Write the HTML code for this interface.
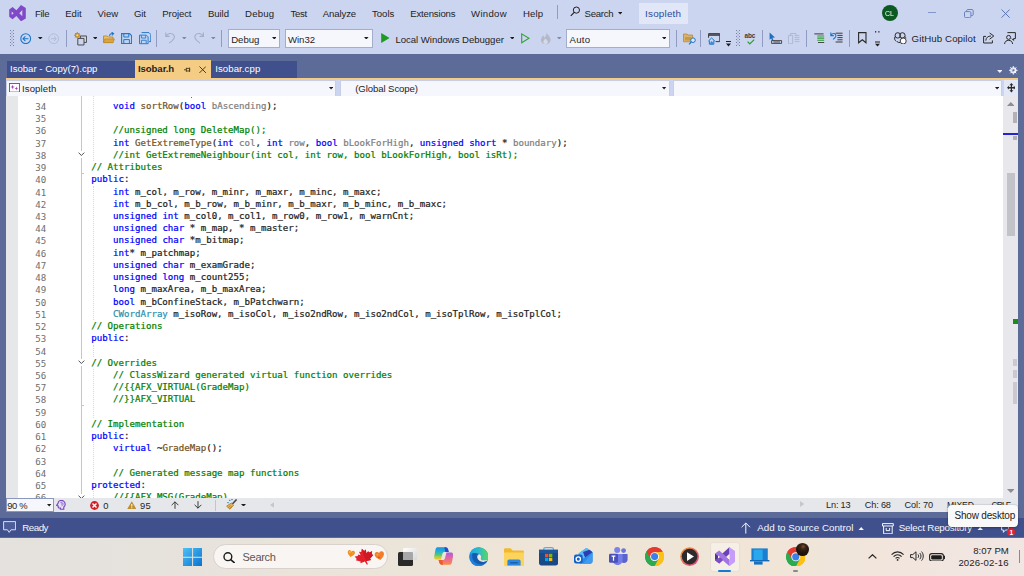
<!DOCTYPE html>
<html lang="en">
<head>
<meta charset="utf-8">
<title>Isopleth - Microsoft Visual Studio</title>
<style>
*{margin:0;padding:0;box-sizing:border-box}
html,body{width:1024px;height:576px;overflow:hidden;background:#5d6b99}
body{position:relative;font-family:"Liberation Sans",sans-serif;font-size:9.5px;color:#1e1e1e}
.r{position:absolute;display:block}
.t{position:absolute;white-space:pre}
#code{position:absolute;left:0;top:0;width:997px;height:402px;font-family:"DejaVu Sans Mono","Liberation Mono",monospace;font-size:9.11px;white-space:pre;color:#1e1e1e}
.ln{position:absolute;left:0;width:997px;height:12.226px;line-height:12.226px}
.ln i{position:absolute;left:29.2px;top:1px;font-style:normal;color:#6e6e6e}
.ln b{position:absolute;left:85.2px;font-weight:normal;-webkit-text-stroke:0.22px currentColor}
.k{color:#0000ff}.c{color:#008000}.f{color:#74531f}.p{color:#808080}.y{color:#2b91af}
</style>
</head>
<body>
<div class="r" style="left:0.0px;top:0.0px;width:1024.0px;height:54.5px;background:#ccd5f0;"></div>
<svg class="r" style="left:9.0px;top:4.7px" width="17" height="16.3" viewBox="0 0 17 16.3"><path d="M0.2 4.6 L3.6 2.1 L7.4 5.3 L12 0 L16.8 2.9 V13.4 L12 16.3 L7.4 11 L3.6 14.2 L0.2 11.7 Z M2.7 6.4 V9.9 L4.7 8.15 Z M13.3 5 L10.3 8.15 L13.3 11.3 Z" fill="#8149c8" fill-rule="evenodd"/></svg>
<div class="t" style="left:35.0px;top:4px;font-size:9.60px;line-height:20px;color:#1e1e1e;letter-spacing:-0.317px;">File</div>
<div class="t" style="left:65.2px;top:4px;font-size:9.60px;line-height:20px;color:#1e1e1e;letter-spacing:-0.011px;">Edit</div>
<div class="t" style="left:97.6px;top:4px;font-size:9.60px;line-height:20px;color:#1e1e1e;letter-spacing:-0.009px;">View</div>
<div class="t" style="left:134.0px;top:4px;font-size:9.60px;line-height:20px;color:#1e1e1e;letter-spacing:-0.122px;">Git</div>
<div class="t" style="left:162.3px;top:4px;font-size:9.60px;line-height:20px;color:#1e1e1e;letter-spacing:-0.111px;">Project</div>
<div class="t" style="left:208.0px;top:4px;font-size:9.60px;line-height:20px;color:#1e1e1e;letter-spacing:-0.089px;">Build</div>
<div class="t" style="left:245.1px;top:4px;font-size:9.60px;line-height:20px;color:#1e1e1e;letter-spacing:0.162px;">Debug</div>
<div class="t" style="left:290.6px;top:4px;font-size:9.60px;line-height:20px;color:#1e1e1e;letter-spacing:-0.352px;">Test</div>
<div class="t" style="left:322.8px;top:4px;font-size:9.60px;line-height:20px;color:#1e1e1e;letter-spacing:-0.122px;">Analyze</div>
<div class="t" style="left:371.9px;top:4px;font-size:9.60px;line-height:20px;color:#1e1e1e;letter-spacing:0.018px;">Tools</div>
<div class="t" style="left:410.3px;top:4px;font-size:9.60px;line-height:20px;color:#1e1e1e;letter-spacing:-0.196px;">Extensions</div>
<div class="t" style="left:471.1px;top:4px;font-size:9.60px;line-height:20px;color:#1e1e1e;letter-spacing:0.293px;">Window</div>
<div class="t" style="left:523.0px;top:4px;font-size:9.60px;line-height:20px;color:#1e1e1e;letter-spacing:0.114px;">Help</div>
<div class="r" style="left:556.5px;top:4.5px;width:1.0px;height:14.5px;background:#8f9bc0;"></div>
<svg class="r" style="left:569.5px;top:6.0px" width="10.5" height="11" viewBox="0 0 10.5 11"><circle cx="6.4" cy="4.1" r="3.1" fill="none" stroke="#1e1e1e" stroke-width="1"/><path d="M4.2 6.4 L0.8 9.9" stroke="#1e1e1e" stroke-width="1.1" fill="none"/></svg>
<div class="t" style="left:584.6px;top:4px;font-size:9.60px;line-height:20px;color:#1e1e1e;letter-spacing:-0.270px;">Search</div>
<svg class="r" style="left:617.6px;top:12.2px" width="4.4" height="2.4" viewBox="0 0 4.4 2.4"><path d="M0 0H4.4 L2.2 2.4 Z" fill="#1e1e1e"/></svg>
<div class="r" style="left:639.0px;top:3.0px;width:48.7px;height:20.8px;background:#e1e7f7;"></div>
<div class="t" style="left:645.1px;top:4px;font-size:9.90px;line-height:20px;color:#2a4a9c;letter-spacing:0.191px;">Isopleth</div>
<div class="r" style="left:881.6px;top:5px;width:16.2px;height:16.2px;border-radius:50%;background:#0b5a22"></div>
<div class="t" style="left:885.1px;top:4px;font-size:7.00px;line-height:20px;color:#fff;letter-spacing:-0.174px;will-change:transform;">CL</div>
<div class="r" style="left:927.5px;top:12.2px;width:8.2px;height:1.1px;background:#8196ca;"></div>
<svg class="r" style="left:963.5px;top:8.6px" width="10" height="9.2" viewBox="0 0 10 9.2"><rect x="0.5" y="2.6" width="6.4" height="6.1" rx="1.2" fill="none" stroke="#6582c0" stroke-width="1"/><path d="M2.6 2.4 V1.7 C2.6 1 3.2 0.5 3.8 0.5 H8 C8.7 0.5 9.2 1 9.2 1.7 V5.4 C9.2 6.1 8.7 6.6 8 6.6 H7.2" fill="none" stroke="#6582c0" stroke-width="1"/></svg>
<svg class="r" style="left:1000.6px;top:8.6px" width="9.2" height="9.2" viewBox="0 0 9.2 9.2"><path d="M0.5 0.5 L8.7 8.7 M8.7 0.5 L0.5 8.7" stroke="#5a76b6" stroke-width="1" fill="none"/></svg>
<svg class="r" style="left:10.2px;top:30.2px" width="4.5" height="15.8" viewBox="0 0 4.5 15.8"><rect x="0" y="0" width="1" height="1" fill="#7983a8"/><rect x="3" y="0" width="1" height="1" fill="#7983a8"/><rect x="1.5" y="1.5" width="1" height="1" fill="#7983a8"/><rect x="0" y="3" width="1" height="1" fill="#7983a8"/><rect x="3" y="3" width="1" height="1" fill="#7983a8"/><rect x="1.5" y="4.5" width="1" height="1" fill="#7983a8"/><rect x="0" y="6" width="1" height="1" fill="#7983a8"/><rect x="3" y="6" width="1" height="1" fill="#7983a8"/><rect x="1.5" y="7.5" width="1" height="1" fill="#7983a8"/><rect x="0" y="9" width="1" height="1" fill="#7983a8"/><rect x="3" y="9" width="1" height="1" fill="#7983a8"/><rect x="1.5" y="10.5" width="1" height="1" fill="#7983a8"/><rect x="0" y="12" width="1" height="1" fill="#7983a8"/><rect x="3" y="12" width="1" height="1" fill="#7983a8"/><rect x="1.5" y="13.5" width="1" height="1" fill="#7983a8"/><rect x="0" y="15" width="1" height="1" fill="#7983a8"/><rect x="3" y="15" width="1" height="1" fill="#7983a8"/><rect x="1.5" y="16.5" width="1" height="1" fill="#7983a8"/></svg>
<svg class="r" style="left:20.2px;top:33.0px" width="11.4" height="11.4" viewBox="0 0 11.4 11.4"><circle cx="5.7" cy="5.7" r="4.9" fill="none" stroke="#1b76c8" stroke-width="1.1"/><path d="M8.4 5.7 H3.2 M5.4 3.3 L3 5.7 L5.4 8.1" fill="none" stroke="#1b76c8" stroke-width="1.1"/></svg>
<svg class="r" style="left:38.0px;top:36.9px" width="4.6" height="2.6" viewBox="0 0 4.6 2.6"><path d="M0 0H4.6 L2.3 2.6 Z" fill="#1e1e1e"/></svg>
<svg class="r" style="left:48.2px;top:33.0px" width="11.4" height="11.4" viewBox="0 0 11.4 11.4"><circle cx="5.7" cy="5.7" r="4.9" fill="none" stroke="#b3bbd4" stroke-width="1"/><path d="M3 5.7 H8.2 M6 3.3 L8.4 5.7 L6 8.1" fill="none" stroke="#b3bbd4" stroke-width="1"/></svg>
<div class="r" style="left:65.8px;top:30.1px;width:1.0px;height:17.2px;background:#8f9bc0;"></div>
<svg class="r" style="left:73.6px;top:32.0px" width="13.6" height="13.6" viewBox="0 0 13.6 13.6"><path d="M6.4 4 H12.6 V10.4 H6.4 Z" fill="#ccd5f0" stroke="#4a4a4a" stroke-width="1"/><path d="M3.8 6.4 H10 V13 H3.8 Z" fill="#ccd5f0" stroke="#4a4a4a" stroke-width="1"/><circle cx="3.3" cy="3.3" r="1.9" fill="none" stroke="#c98a1b" stroke-width="1.2"/><path d="M3.3 0 V6.6 M0 3.3 H6.6 M1 1 L5.6 5.6 M5.6 1 L1 5.6" stroke="#c98a1b" stroke-width="0.9"/><circle cx="3.3" cy="3.3" r="1.1" fill="#ccd5f0"/></svg>
<svg class="r" style="left:92.6px;top:36.9px" width="4.6" height="2.6" viewBox="0 0 4.6 2.6"><path d="M0 0H4.6 L2.3 2.6 Z" fill="#1e1e1e"/></svg>
<svg class="r" style="left:102.8px;top:32.4px" width="12.2" height="11.4" viewBox="0 0 12.2 11.4"><path d="M0.5 4 H4.3 L5.3 5 H10 V10.6 H0.5 Z" fill="#e6bf74" stroke="#bf8a25" stroke-width="0.9"/><path d="M1.8 7 H11.4 L10 10.6 H0.6 Z" fill="#d9a544" stroke="#bf8a25" stroke-width="0.8"/><path d="M6.6 4 C6.6 2 8 1.4 10 1.6 M8.6 0.2 L10.6 1.6 L8.9 3.3" fill="none" stroke="#1b76c8" stroke-width="1.1"/></svg>
<svg class="r" style="left:121.0px;top:33.0px" width="11.4" height="11.4" viewBox="0 0 11.4 11.4"><path d="M0.6 0.6 H8.6 L10.6 2.6 V10.6 H0.6 Z" fill="#bdd5f3" stroke="#2577c9" stroke-width="1.1"/><path d="M2.8 0.8 V4 H7.8 V0.8 M2.8 10.4 V6.6 H8.4 V10.4" fill="none" stroke="#2577c9" stroke-width="1"/></svg>
<svg class="r" style="left:138.6px;top:32.4px" width="12.4" height="12.4" viewBox="0 0 12.4 12.4"><path d="M2.6 0.6 H10 L11.8 2.4 V9.6 H10" fill="none" stroke="#2577c9" stroke-width="1"/><g transform="translate(0,2.6) scale(0.86)"><path d="M0.6 0.6 H8.6 L10.6 2.6 V10.6 H0.6 Z" fill="#bdd5f3" stroke="#2577c9" stroke-width="1.1"/><path d="M2.8 0.8 V4 H7.8 V0.8 M2.8 10.4 V6.6 H8.4 V10.4" fill="none" stroke="#2577c9" stroke-width="1"/></g></svg>
<div class="r" style="left:156.4px;top:30.1px;width:1.0px;height:17.2px;background:#8f9bc0;"></div>
<svg class="r" style="left:165.0px;top:32.4px" width="10.2" height="11.4" viewBox="0 0 10.2 11.4"><path d="M0.8 0.6 V4.4 H4.6 M1 4.2 C2.6 1.2 6.6 0.6 8.6 2.8 C10.6 5.2 8.6 8.4 4.2 11" fill="none" stroke="#a4accb" stroke-width="1.1"/></svg>
<svg class="r" style="left:182.4px;top:36.9px" width="4.6" height="2.6" viewBox="0 0 4.6 2.6"><path d="M0 0H4.6 L2.3 2.6 Z" fill="#7f88a8"/></svg>
<svg class="r" style="left:194.0px;top:32.4px" width="10.2" height="11.4" viewBox="0 0 10.2 11.4"><g transform="translate(10.2,0) scale(-1,1)"><path d="M0.8 0.6 V4.4 H4.6 M1 4.2 C2.6 1.2 6.6 0.6 8.6 2.8 C10.6 5.2 8.6 8.4 4.2 11" fill="none" stroke="#a4accb" stroke-width="1.1"/></g></svg>
<svg class="r" style="left:211.0px;top:36.9px" width="4.6" height="2.6" viewBox="0 0 4.6 2.6"><path d="M0 0H4.6 L2.3 2.6 Z" fill="#7f88a8"/></svg>
<div class="r" style="left:221.2px;top:30.1px;width:1.0px;height:17.2px;background:#8f9bc0;"></div>
<div class="r" style="left:228.3px;top:29.3px;width:51.4px;height:18.9px;background:#f5f7fd;border:1px solid #a3adcc"></div>
<div class="t" style="left:231.2px;top:30px;font-size:9.60px;line-height:20px;color:#1e1e1e;letter-spacing:-0.018px;">Debug</div>
<svg class="r" style="left:271.5px;top:36.9px" width="4.6" height="2.6" viewBox="0 0 4.6 2.6"><path d="M0 0H4.6 L2.3 2.6 Z" fill="#1e1e1e"/></svg>
<div class="r" style="left:285.0px;top:29.3px;width:87.6px;height:18.9px;background:#f5f7fd;border:1px solid #a3adcc"></div>
<div class="t" style="left:287.9px;top:30px;font-size:9.60px;line-height:20px;color:#1e1e1e;letter-spacing:0.018px;">Win32</div>
<svg class="r" style="left:364.4px;top:36.9px" width="4.6" height="2.6" viewBox="0 0 4.6 2.6"><path d="M0 0H4.6 L2.3 2.6 Z" fill="#1e1e1e"/></svg>
<svg class="r" style="left:381.2px;top:33.4px" width="8.8" height="10.2" viewBox="0 0 8.8 10.2"><path d="M0.2 0.1 L8.6 5.1 L0.2 10.1 Z" fill="#1d9a22"/></svg>
<div class="t" style="left:395.5px;top:30px;font-size:9.60px;line-height:20px;color:#1e1e1e;letter-spacing:-0.045px;">Local Windows Debugger</div>
<svg class="r" style="left:509.6px;top:36.9px" width="4.6" height="2.6" viewBox="0 0 4.6 2.6"><path d="M0 0H4.6 L2.3 2.6 Z" fill="#1e1e1e"/></svg>
<svg class="r" style="left:521.3px;top:33.0px" width="9" height="10.6" viewBox="0 0 9 10.6"><path d="M0.7 0.9 L8 5.3 L0.7 9.7 Z" fill="none" stroke="#2da334" stroke-width="1.1"/></svg>
<svg class="r" style="left:540.0px;top:32.0px" width="11.6" height="12.6" viewBox="0 0 11.6 12.6"><path d="M6.4 0.4 C7.4 2.4 9.6 3.6 10.4 6.4 C11.2 9.6 9 12.2 5.8 12.2 C2.6 12.2 0.4 9.8 1 7 C1.4 5.2 2.6 4.6 3 3.2 C4 4 4.2 5 4.2 5.8 C5.8 4.6 6.8 2.6 6.4 0.4 Z" fill="#b4b9c9"/><path d="M5.8 12 C4 12 3 10.6 3.4 9.2 C3.8 8 4.8 7.6 5 6.4 C6.6 7.4 8 8.6 7.8 10.2 C7.6 11.4 6.8 12 5.8 12 Z" fill="#d6dbea"/></svg>
<svg class="r" style="left:557.0px;top:36.9px" width="4.6" height="2.6" viewBox="0 0 4.6 2.6"><path d="M0 0H4.6 L2.3 2.6 Z" fill="#7f88a8"/></svg>
<div class="r" style="left:566.4px;top:29.3px;width:103.6px;height:18.9px;background:#f5f7fd;border:1px solid #a3adcc"></div>
<div class="t" style="left:569.6px;top:30px;font-size:9.60px;line-height:20px;color:#1e1e1e;letter-spacing:0.213px;">Auto</div>
<svg class="r" style="left:661.8px;top:36.9px" width="4.6" height="2.6" viewBox="0 0 4.6 2.6"><path d="M0 0H4.6 L2.3 2.6 Z" fill="#1e1e1e"/></svg>
<div class="r" style="left:675.6px;top:30.1px;width:1.0px;height:17.2px;background:#8f9bc0;"></div>
<svg class="r" style="left:683.0px;top:33.0px" width="13.2" height="11.8" viewBox="0 0 13.2 11.8"><path d="M0.5 1 H4 L5 2 H9.6 V8.8 H0.5 Z" fill="#d9b16a" stroke="#b88a35" stroke-width="0.8"/><rect x="2" y="4" width="6" height="3.4" fill="#c79a4a"/><circle cx="10" cy="7.2" r="2.3" fill="#dfe9fb" stroke="#1b76c8" stroke-width="1"/><path d="M8.4 9 L6 11.4" stroke="#1b76c8" stroke-width="1.1"/></svg>
<div class="r" style="left:700.4px;top:30.1px;width:1.0px;height:17.2px;background:#8f9bc0;"></div>
<svg class="r" style="left:707.6px;top:33.4px" width="12.6" height="11.8" viewBox="0 0 12.6 11.8"><path d="M0.6 0.6 H11.8 V8.6 H7.6 M0.6 4.8 V0.6" fill="none" stroke="#3a3a3a" stroke-width="1"/><path d="M0.6 1.2 H11.8 V2.8 H0.6 Z" fill="#3a3a3a"/><path d="M0.4 8 L3.6 5 L6.8 8 M1.4 7.6 V11.2 H5.8 V7.6 M3 11.2 V9 H4.2 V11.2" fill="none" stroke="#1b76c8" stroke-width="1"/></svg>
<svg class="r" style="left:726.0px;top:41.4px" width="5" height="5.6" viewBox="0 0 5 5.6"><path d="M0 0.5 H5" stroke="#1e1e1e" stroke-width="1"/><path d="M0 2.4 H5 L2.5 5.4 Z" fill="#1e1e1e"/></svg>
<svg class="r" style="left:735.8px;top:30.2px" width="4.5" height="15.8" viewBox="0 0 4.5 15.8"><rect x="0" y="0" width="1" height="1" fill="#7983a8"/><rect x="3" y="0" width="1" height="1" fill="#7983a8"/><rect x="1.5" y="1.5" width="1" height="1" fill="#7983a8"/><rect x="0" y="3" width="1" height="1" fill="#7983a8"/><rect x="3" y="3" width="1" height="1" fill="#7983a8"/><rect x="1.5" y="4.5" width="1" height="1" fill="#7983a8"/><rect x="0" y="6" width="1" height="1" fill="#7983a8"/><rect x="3" y="6" width="1" height="1" fill="#7983a8"/><rect x="1.5" y="7.5" width="1" height="1" fill="#7983a8"/><rect x="0" y="9" width="1" height="1" fill="#7983a8"/><rect x="3" y="9" width="1" height="1" fill="#7983a8"/><rect x="1.5" y="10.5" width="1" height="1" fill="#7983a8"/><rect x="0" y="12" width="1" height="1" fill="#7983a8"/><rect x="3" y="12" width="1" height="1" fill="#7983a8"/><rect x="1.5" y="13.5" width="1" height="1" fill="#7983a8"/><rect x="0" y="15" width="1" height="1" fill="#7983a8"/><rect x="3" y="15" width="1" height="1" fill="#7983a8"/><rect x="1.5" y="16.5" width="1" height="1" fill="#7983a8"/></svg>
<div class="t" style="left:744.6px;top:32.2px;font-size:6.4px;line-height:7px;font-weight:bold;color:#3a3a3a;letter-spacing:-0.1px">abc</div>
<svg class="r" style="left:747.0px;top:38.6px" width="8" height="6" viewBox="0 0 8 6"><path d="M0.6 2.6 L2.8 5 L7.2 0.6" fill="none" stroke="#2a9d2f" stroke-width="1.2"/></svg>
<div class="r" style="left:761.8px;top:30.1px;width:1.0px;height:17.2px;background:#8f9bc0;"></div>
<svg class="r" style="left:769.4px;top:32.4px" width="13.4" height="12" viewBox="0 0 13.4 12"><path d="M0.6 0.4 L6 5.6 L3.4 5.8 L4.6 8.6 L3.4 9 L2.2 6.4 L0.6 7.8 Z" fill="#1b6fc0"/><path d="M2.6 8.6 H12.6 V11.4 H2.6 Z M4.4 10 H11" fill="none" stroke="#3a3a3a" stroke-width="0.9"/></svg>
<svg class="r" style="left:788.0px;top:33.0px" width="12" height="11.4" viewBox="0 0 12 11.4"><path d="M0.5 2.4 H4.6 V10.8 H0.5 Z M2.4 2.2 V0.5 H8 V2.4 M6.6 2.6 H11.4 M6.6 4.6 H11.4 M6.6 6.6 H11.4 M6.6 8.6 H11.4" fill="none" stroke="#b0b8d2" stroke-width="1"/></svg>
<div class="r" style="left:805.8px;top:30.1px;width:1.0px;height:17.2px;background:#8f9bc0;"></div>
<svg class="r" style="left:814.0px;top:32.8px" width="10.6" height="10.6" viewBox="0 0 10.6 10.6"><path d="M0.3 0.9 H9.6" stroke="#3a3a3a" stroke-width="1"/><path d="M3.3 3 H10.2 M3.3 5.1 H10.2 M3.3 7.2 H10.2" stroke="#2a9d2f" stroke-width="1.1"/><path d="M4 9.6 H10.2" stroke="#3a3a3a" stroke-width="1"/></svg>
<svg class="r" style="left:830.4px;top:32.4px" width="12.8" height="11.2" viewBox="0 0 12.8 11.2"><path d="M5.6 1.2 H12.6 M7.4 3.4 H12.6 M7.4 5.6 H12.6 M7.4 7.8 H12.6 M5.6 10 H12.6" stroke="#3a3a3a" stroke-width="1"/><path d="M0.8 0.6 V3.6 H3.8 M1 3.4 C2 1.2 4.6 1 5.6 2.6 C6.6 4.4 5.2 6 3 7.4" fill="none" stroke="#1b76c8" stroke-width="1.1"/></svg>
<div class="r" style="left:848.8px;top:30.1px;width:1.0px;height:17.2px;background:#8f9bc0;"></div>
<svg class="r" style="left:858.0px;top:32.4px" width="8.8" height="11.6" viewBox="0 0 8.8 11.6"><path d="M0.6 0.6 H8 V10.8 L4.3 7.8 L0.6 10.8 Z" fill="none" stroke="#2a2a2a" stroke-width="1.1"/></svg>
<svg class="r" style="left:875.4px;top:31.0px" width="5" height="16" viewBox="0 0 5 16"><rect x="0.2" y="0" width="1" height="1.6" fill="#1e1e1e"/><rect x="3.4" y="0" width="1" height="1.6" fill="#1e1e1e"/><path d="M0 11 H5" stroke="#1e1e1e" stroke-width="1"/><path d="M0 12.8 H5 L2.5 15.6 Z" fill="#1e1e1e"/></svg>
<svg class="r" style="left:894.4px;top:31.6px" width="12.8" height="12.4" viewBox="0 0 12.8 12.4"><circle cx="3.8" cy="3.4" r="2.7" fill="none" stroke="#2a2a2a" stroke-width="1"/><circle cx="8.4" cy="3.4" r="2.7" fill="none" stroke="#2a2a2a" stroke-width="1"/><path d="M1 4.6 C0.2 6.4 0.6 8.4 2.4 9.4 M11.2 4.6 C11.6 5.2 11.8 5.8 11.8 6.4" fill="none" stroke="#2a2a2a" stroke-width="1"/><circle cx="9.2" cy="9" r="3" fill="#fff" stroke="#2a2a2a" stroke-width="0.9"/><path d="M3 9.6 C4 10.4 5 10.6 6 10.6" fill="none" stroke="#2a2a2a" stroke-width="1"/></svg>
<div class="t" style="left:911.6px;top:29px;font-size:9.70px;line-height:20px;color:#1e1e1e;letter-spacing:0.087px;">GitHub Copilot</div>
<svg class="r" style="left:983.0px;top:32.4px" width="12" height="11.6" viewBox="0 0 12 11.6"><path d="M3 4.4 H0.6 V11 H9.4 V8.4" fill="none" stroke="#2a2a2a" stroke-width="1"/><path d="M2.8 8.6 C3 5.6 5 4 8 4 M6.6 1 L10.8 4 L6.6 7.2" fill="none" stroke="#2a2a2a" stroke-width="1"/></svg>
<svg class="r" style="left:1004.0px;top:32.0px" width="12" height="12.4" viewBox="0 0 12 12.4"><path d="M3.4 0.6 H11.4 V6.6 H9.6 V8.4 L7.8 6.6" fill="none" stroke="#2a2a2a" stroke-width="1"/><circle cx="4.6" cy="5.4" r="2" fill="#ccd5f0" stroke="#2a2a2a" stroke-width="1"/><path d="M0.6 12 C0.8 9.4 2.4 8.4 4.6 8.4 C6.8 8.4 8.4 9.4 8.6 12" fill="none" stroke="#2a2a2a" stroke-width="1"/></svg>
<div class="r" style="left:0.0px;top:54.0px;width:1024.0px;height:26.0px;background:#5d6b99;"></div>
<div class="r" style="left:7.0px;top:61.0px;width:127.6px;height:17.0px;background:#40508d;"></div>
<div class="t" style="left:10.0px;top:59px;font-size:9.60px;line-height:20px;color:#fff;letter-spacing:-0.005px;">Isobar - Copy(7).cpp</div>
<div class="r" style="left:134.6px;top:59.7px;width:76.4px;height:18.3px;background:#f5cc84;"></div>
<div class="t" style="left:137.9px;top:59px;font-size:9.60px;line-height:20px;color:#1e1e1e;font-weight:bold;letter-spacing:-0.064px;">Isobar.h</div>
<svg class="r" style="left:183.6px;top:66.6px" width="7" height="5.6" viewBox="0 0 7 5.6"><path d="M0 2.8 H2.4 M2.4 0.8 V4.8 M2.4 1.4 H5.6 V4 H2.4 M5.6 0.6 V5" fill="none" stroke="#4a3a1a" stroke-width="0.9"/></svg>
<svg class="r" style="left:199.0px;top:65.6px" width="7.4" height="7.4" viewBox="0 0 7.4 7.4"><path d="M0.5 0.5 L6.9 6.9 M6.9 0.5 L0.5 6.9" stroke="#3a2c10" stroke-width="0.9"/></svg>
<div class="r" style="left:211.0px;top:61.0px;width:86.0px;height:17.0px;background:#40508d;"></div>
<div class="t" style="left:215.2px;top:59px;font-size:9.60px;line-height:20px;color:#fff;letter-spacing:0.090px;">Isobar.cpp</div>
<div class="r" style="left:6.0px;top:78.0px;width:1012.0px;height:2.0px;background:#f5cc84;"></div>
<svg class="r" style="left:996.8px;top:69.8px" width="5.6" height="3" viewBox="0 0 5.6 3"><path d="M0 0H5.6 L2.8 3 Z" fill="#eef1fb"/></svg>
<svg class="r" style="left:1009.4px;top:66.4px" width="8.6" height="8.6" viewBox="0 0 8.6 8.6"><circle cx="4.3" cy="4.3" r="2.5" fill="none" stroke="#eef1fb" stroke-width="1.3"/><path d="M4.3 0 V8.6 M0 4.3 H8.6 M1.3 1.3 L7.3 7.3 M7.3 1.3 L1.3 7.3" stroke="#eef1fb" stroke-width="1"/><circle cx="4.3" cy="4.3" r="1" fill="#5d6b99"/></svg>
<div class="r" style="left:6.0px;top:80.0px;width:1012.0px;height:16.5px;background:#ccd5f0;"></div>
<div class="r" style="left:6.0px;top:80px;width:330.3px;height:16.5px;background:#f5f7fd;border:1px solid #c7cfe8;border-bottom:1.6px solid #7e8bb3"></div>
<svg class="r" style="left:328.7px;top:87.4px" width="4.2" height="2.4" viewBox="0 0 4.2 2.4"><path d="M0 0H4.2 L2.1 2.4 Z" fill="#1e1e1e"/></svg>
<div class="r" style="left:339.6px;top:80px;width:330.4px;height:16.5px;background:#f5f7fd;border:1px solid #c7cfe8;border-bottom:1.6px solid #7e8bb3"></div>
<svg class="r" style="left:662.4px;top:87.4px" width="4.2" height="2.4" viewBox="0 0 4.2 2.4"><path d="M0 0H4.2 L2.1 2.4 Z" fill="#1e1e1e"/></svg>
<div class="r" style="left:673.0px;top:80px;width:329.4px;height:16.5px;background:#f5f7fd;border:1px solid #c7cfe8;border-bottom:1.6px solid #7e8bb3"></div>
<svg class="r" style="left:994.8px;top:87.4px" width="4.2" height="2.4" viewBox="0 0 4.2 2.4"><path d="M0 0H4.2 L2.1 2.4 Z" fill="#1e1e1e"/></svg>
<svg class="r" style="left:8.8px;top:82.6px" width="11" height="9.6" viewBox="0 0 11 9.6"><rect x="0.5" y="0.5" width="10" height="8.6" fill="#fdfdff" stroke="#5a5a5a" stroke-width="0.9"/><path d="M3.6 1.8 L4.2 3.4 L5.8 4 L4.2 4.6 L3.6 6.2 L3 4.6 L1.4 4 L3 3.4 Z M7.4 3.6 L7.9 4.9 L9.2 5.4 L7.9 5.9 L7.4 7.2 L6.9 5.9 L5.6 5.4 L6.9 4.9 Z" fill="#a33fb5"/></svg>
<div class="t" style="left:22.0px;top:79px;font-size:9.60px;line-height:20px;color:#1e1e1e;letter-spacing:0.097px;">Isopleth</div>
<div class="t" style="left:355.2px;top:79px;font-size:9.60px;line-height:20px;color:#1e1e1e;letter-spacing:-0.088px;">(Global Scope)</div>
<div class="r" style="left:1004.0px;top:80.0px;width:14.0px;height:16.5px;background:#e3e8f7;"></div>
<svg class="r" style="left:1006.6px;top:83.4px" width="8.8" height="9.4" viewBox="0 0 8.8 9.4"><path d="M4.4 0 L6.4 2.2 H5 V4 H6.8 V2.8 L8.8 4.7 L6.8 6.6 V5.4 H5 V7.2 H6.4 L4.4 9.4 L2.4 7.2 H3.8 V5.4 H2 V6.6 L0 4.7 L2 2.8 V4 H3.8 V2.2 H2.4 Z" fill="#2a2a2a"/></svg>
<div class="r" style="left:6px;top:96.4px;width:997px;height:401.6px;background:#fff;overflow:hidden">
<div class="r" style="left:0;top:0;width:12px;height:402px;background:#e6e7e8"></div>
<div class="r" style="left:75.2px;top:0;width:0.7px;height:402px;background:#c6c6c6"></div>
<div class="r" style="left:86.8px;top:0.00px;width:0;height:64.73px;border-left:0.8px dotted #d9d9d9"></div>
<div class="r" style="left:86.8px;top:89.18px;width:0;height:134.49px;border-left:0.8px dotted #d9d9d9"></div>
<div class="r" style="left:86.8px;top:248.12px;width:0;height:12.23px;border-left:0.8px dotted #d9d9d9"></div>
<div class="r" style="left:86.8px;top:272.57px;width:0;height:48.90px;border-left:0.8px dotted #d9d9d9"></div>
<div class="r" style="left:86.8px;top:345.93px;width:0;height:36.68px;border-left:0.8px dotted #d9d9d9"></div>
<div class="r" style="left:86.8px;top:394.83px;width:0;height:7.17px;border-left:0.8px dotted #d9d9d9"></div>
<div class="r" style="left:75.2px;top:76.36px;width:2.6px;height:0.8px;background:#c4c4c4"></div>
<div class="r" style="left:75.2px;top:308.65px;width:2.6px;height:0.8px;background:#c4c4c4"></div>
<div class="r" style="left:71.4px;top:55.10px;width:8.4px;height:6.6px;background:#fff"></div>
<svg class="r" style="left:72.2px;top:56.10px" width="6.8" height="4.4" viewBox="0 0 6.8 4.4"><path d="M0.5 0.6 L3.4 3.5 L6.3 0.6" fill="none" stroke="#3c3c3c" stroke-width="0.9"/></svg>
<div class="r" style="left:71.4px;top:262.95px;width:8.4px;height:6.6px;background:#fff"></div>
<svg class="r" style="left:72.2px;top:263.95px" width="6.8" height="4.4" viewBox="0 0 6.8 4.4"><path d="M0.5 0.6 L3.4 3.5 L6.3 0.6" fill="none" stroke="#3c3c3c" stroke-width="0.9"/></svg>
<div class="r" style="left:71.4px;top:397.43px;width:8.4px;height:6.6px;background:#fff"></div>
<svg class="r" style="left:72.2px;top:398.43px" width="6.8" height="4.4" viewBox="0 0 6.8 4.4"><path d="M0.5 0.6 L3.4 3.5 L6.3 0.6" fill="none" stroke="#3c3c3c" stroke-width="0.9"/></svg>
<div id="code">
<div class="ln" style="top:3.600px"><i>34</i><b>    <span class="k">void</span> <span class="f">sortRow</span>(<span class="k">bool</span> <span class="p">bAscending</span>);</b></div>
<div class="ln" style="top:15.826px"><i>35</i><b></b></div>
<div class="ln" style="top:28.052px"><i>36</i><b>    <span class="c">//unsigned long DeleteMap();</span></b></div>
<div class="ln" style="top:40.278px"><i>37</i><b>    <span class="k">int</span> <span class="f">GetExtremeType</span>(<span class="k">int</span> <span class="p">col</span>, <span class="k">int</span> <span class="p">row</span>, <span class="k">bool</span> <span class="p">bLookForHigh</span>, <span class="k">unsigned</span> <span class="k">short</span> * <span class="p">boundary</span>);</b></div>
<div class="ln" style="top:52.504px"><i>38</i><b>    <span class="c">//int GetExtremeNeighbour(int col, int row, bool bLookForHigh, bool isRt);</span></b></div>
<div class="ln" style="top:64.730px"><i>39</i><b><span class="c">// Attributes</span></b></div>
<div class="ln" style="top:76.956px"><i>40</i><b><span class="k">public</span>:</b></div>
<div class="ln" style="top:89.182px"><i>41</i><b>    <span class="k">int</span> m_col, m_row, m_minr, m_maxr, m_minc, m_maxc;</b></div>
<div class="ln" style="top:101.408px"><i>42</i><b>    <span class="k">int</span> m_b_col, m_b_row, m_b_minr, m_b_maxr, m_b_minc, m_b_maxc;</b></div>
<div class="ln" style="top:113.634px"><i>43</i><b>    <span class="k">unsigned</span> <span class="k">int</span> m_col0, m_col1, m_row0, m_row1, m_warnCnt;</b></div>
<div class="ln" style="top:125.860px"><i>44</i><b>    <span class="k">unsigned</span> <span class="k">char</span> * m_map, * m_master;</b></div>
<div class="ln" style="top:138.086px"><i>45</i><b>    <span class="k">unsigned</span> <span class="k">char</span> *m_bitmap;</b></div>
<div class="ln" style="top:150.312px"><i>46</i><b>    <span class="k">int</span>* m_patchmap;</b></div>
<div class="ln" style="top:162.538px"><i>47</i><b>    <span class="k">unsigned</span> <span class="k">char</span> m_examGrade;</b></div>
<div class="ln" style="top:174.764px"><i>48</i><b>    <span class="k">unsigned</span> <span class="k">long</span> m_count255;</b></div>
<div class="ln" style="top:186.990px"><i>49</i><b>    <span class="k">long</span> m_maxArea, m_b_maxArea;</b></div>
<div class="ln" style="top:199.216px"><i>50</i><b>    <span class="k">bool</span> m_bConfineStack, m_bPatchwarn;</b></div>
<div class="ln" style="top:211.442px"><i>51</i><b>    <span class="y">CWordArray</span> m_isoRow, m_isoCol, m_iso2ndRow, m_iso2ndCol, m_isoTplRow, m_isoTplCol;</b></div>
<div class="ln" style="top:223.668px"><i>52</i><b><span class="c">// Operations</span></b></div>
<div class="ln" style="top:235.894px"><i>53</i><b><span class="k">public</span>:</b></div>
<div class="ln" style="top:248.120px"><i>54</i><b></b></div>
<div class="ln" style="top:260.346px"><i>55</i><b><span class="c">// Overrides</span></b></div>
<div class="ln" style="top:272.572px"><i>56</i><b>    <span class="c">// ClassWizard generated virtual function overrides</span></b></div>
<div class="ln" style="top:284.798px"><i>57</i><b>    <span class="c">//{{AFX_VIRTUAL(GradeMap)</span></b></div>
<div class="ln" style="top:297.024px"><i>58</i><b>    <span class="c">//}}AFX_VIRTUAL</span></b></div>
<div class="ln" style="top:309.250px"><i>59</i><b></b></div>
<div class="ln" style="top:321.476px"><i>60</i><b><span class="c">// Implementation</span></b></div>
<div class="ln" style="top:333.702px"><i>61</i><b><span class="k">public</span>:</b></div>
<div class="ln" style="top:345.928px"><i>62</i><b>    <span class="k">virtual</span> ~<span class="f">GradeMap</span>();</b></div>
<div class="ln" style="top:358.154px"><i>63</i><b></b></div>
<div class="ln" style="top:370.380px"><i>64</i><b>    <span class="c">// Generated message map functions</span></b></div>
<div class="ln" style="top:382.606px"><i>65</i><b><span class="k">protected</span>:</b></div>
<div class="ln" style="top:394.832px"><i>66</i><b>    <span class="c">//{{AFX_MSG(GradeMap)</span></b></div>
</div></div>
<div class="r" style="left:191.4px;top:96.6px;width:1.0px;height:1.6px;background:#6a6a6a;"></div>
<div class="r" style="left:1003.0px;top:96.4px;width:15.0px;height:401.6px;background:#e8e8ec;"></div>
<svg class="r" style="left:1006.8px;top:102.2px" width="7.6" height="4" viewBox="0 0 7.6 4"><path d="M0 4 L3.8 0 L7.6 4 Z" fill="#8c8c94"/></svg>
<svg class="r" style="left:1006.8px;top:488.6px" width="7.6" height="4" viewBox="0 0 7.6 4"><path d="M0 0 L3.8 4 L7.6 0 Z" fill="#8c8c94"/></svg>
<div class="r" style="left:1013.2px;top:112.0px;width:4.2px;height:10.5px;background:#b2b2b6;"></div>
<div class="r" style="left:1003.0px;top:132.6px;width:15.0px;height:2.0px;background:#2525d0;"></div>
<div class="r" style="left:1013.2px;top:135.8px;width:4.2px;height:4.6px;background:#b2b2b6;"></div>
<div class="r" style="left:1007.0px;top:172.8px;width:8.0px;height:63.6px;background:#c2c3c9;"></div>
<div class="r" style="left:1012.8px;top:319.4px;width:4.8px;height:4.8px;background:#1c8c1c;"></div>
<div class="r" style="left:1012.8px;top:358.8px;width:4.6px;height:7.0px;background:#c9c9cf;"></div>
<div class="r" style="left:1012.8px;top:370.0px;width:4.6px;height:8.0px;background:#c9c9cf;"></div>
<div class="r" style="left:1012.8px;top:381.6px;width:4.6px;height:22.4px;background:#c9c9cf;"></div>
<div class="r" style="left:6.0px;top:498.3px;width:1012.0px;height:13.5px;background:#e6e7eb;"></div>
<div class="r" style="left:6px;top:498.3px;width:47.5px;height:13.5px;background:#f5f7fd;border:1px solid #8c97bd"></div>
<div class="t" style="left:7.2px;top:496px;font-size:9.40px;line-height:20px;color:#1e1e1e;letter-spacing:-0.306px;">90 %</div>
<svg class="r" style="left:47.2px;top:504.2px" width="4.4" height="2.6" viewBox="0 0 4.4 2.6"><path d="M0 0H4.4 L2.2 2.6 Z" fill="#1e1e1e"/></svg>
<svg class="r" style="left:56.2px;top:500.4px" width="9.8" height="9.6" viewBox="0 0 9.8 9.6"><path d="M4.2 0.6 C6.6 -0.2 9.2 1.6 9.2 4.2 C9.2 5.6 8.6 6.4 7.8 7 V9.2 H4.4 V8 H3 C2.4 8 2.2 7.6 2.2 7 V6 L0.6 5.4 L2 3.4 C2 2 3 1 4.2 0.6 Z" fill="#e4ddf3" stroke="#7245bb" stroke-width="1.1"/><path d="M4.4 2.4 C5.6 2 6.8 2.6 7 3.8 C7.2 5 6.4 5.6 5.6 5.8 M5 4 H6" fill="none" stroke="#7b4fc0" stroke-width="0.8"/></svg>
<svg class="r" style="left:90.4px;top:500.6px" width="9" height="9" viewBox="0 0 9 9"><circle cx="4.5" cy="4.5" r="4.4" fill="#d31f24"/><path d="M2.5 2.5 L6.5 6.5 M6.5 2.5 L2.5 6.5" stroke="#fff" stroke-width="1.4"/></svg>
<div class="t" style="left:103.3px;top:496px;font-size:9.40px;line-height:20px;color:#1e1e1e;letter-spacing:-0.028px;">0</div>
<svg class="r" style="left:126.8px;top:501.2px" width="9.6" height="8.4" viewBox="0 0 9.6 8.4"><path d="M4.8 0.3 L9.4 8.1 H0.2 Z" fill="#bf8f2e"/><path d="M4.8 3 V5.6" stroke="#fff" stroke-width="1"/><rect x="4.3" y="6.3" width="1" height="1" fill="#fff"/></svg>
<div class="t" style="left:139.9px;top:496px;font-size:9.40px;line-height:20px;color:#1e1e1e;letter-spacing:0.272px;">95</div>
<svg class="r" style="left:170.8px;top:501.4px" width="8" height="8" viewBox="0 0 8 8"><path d="M4 7.8 V0.8 M0.6 4.2 L4 0.8 L7.4 4.2" fill="none" stroke="#2a2a2a" stroke-width="0.9"/></svg>
<svg class="r" style="left:193.8px;top:501.4px" width="8" height="8" viewBox="0 0 8 8"><path d="M4 0.2 V7.2 M0.6 3.8 L4 7.2 L7.4 3.8" fill="none" stroke="#2a2a2a" stroke-width="0.9"/></svg>
<div class="r" style="left:215.2px;top:499.6px;width:0.8px;height:11.0px;background:#c4c5cc;"></div>
<svg class="r" style="left:226.4px;top:499.4px" width="11.2" height="10.6" viewBox="0 0 11.2 10.6"><path d="M10.6 0.4 L6.4 5" stroke="#4a4a4a" stroke-width="1.6"/><path d="M5.2 4 L7.6 6.2 L4 10.2 L0.6 7.2 Z" fill="#e2b45a" stroke="#a9771d" stroke-width="0.8"/><path d="M2.4 8.6 L4.6 6.2 M3.4 9.6 L5.8 7" stroke="#a9771d" stroke-width="0.6"/><rect x="3.2" y="0.8" width="1.2" height="1.2" fill="#1b76c8"/><rect x="5.4" y="0" width="1.2" height="1.2" fill="#1b76c8"/><rect x="1.4" y="3" width="1.2" height="1.2" fill="#1b76c8"/></svg>
<svg class="r" style="left:241.0px;top:503.5px" width="5" height="2.6" viewBox="0 0 5 2.6"><path d="M0 0H5 L2.5 2.6 Z" fill="#1e1e1e"/></svg>
<svg class="r" style="left:270.0px;top:502.0px" width="4.2" height="6" viewBox="0 0 4.2 6"><path d="M4.2 0 V6 L0 3 Z" fill="#c6c7ce"/></svg>
<svg class="r" style="left:799.6px;top:501.2px" width="4.2" height="6" viewBox="0 0 4.2 6"><path d="M0 0 V6 L4.2 3 Z" fill="#c6c7ce"/></svg>
<div class="t" style="left:826.1px;top:495px;font-size:9.20px;line-height:20px;color:#1e1e1e;letter-spacing:-0.213px;">Ln: 13</div>
<div class="t" style="left:864.8px;top:495px;font-size:9.20px;line-height:20px;color:#1e1e1e;letter-spacing:-0.184px;">Ch: 68</div>
<div class="t" style="left:904.4px;top:495px;font-size:9.20px;line-height:20px;color:#1e1e1e;letter-spacing:-0.079px;">Col: 70</div>
<div class="t" style="left:946.9px;top:495px;font-size:8.60px;line-height:20px;color:#1e1e1e;letter-spacing:-0.027px;">MIXED</div>
<div class="t" style="left:991.6px;top:495px;font-size:8.60px;line-height:20px;color:#1e1e1e;letter-spacing:-0.989px;">CRLF</div>
<div class="r" style="left:0.0px;top:518.0px;width:1024.0px;height:19.4px;background:#40508d;"></div>
<svg class="r" style="left:2.8px;top:521.4px" width="13.2" height="12.4" viewBox="0 0 13.2 12.4"><path d="M0.6 0.6 H12.6 V8.8 H8 L6.2 11.4 L4.4 8.8 H0.6 Z" fill="#4d5d9c" stroke="#e8ecf8" stroke-width="0.9"/></svg>
<div class="t" style="left:22.3px;top:518px;font-size:9.80px;line-height:20px;color:#f4f6fc;letter-spacing:-0.526px;">Ready</div>
<svg class="r" style="left:741.0px;top:522.2px" width="9.6" height="11.8" viewBox="0 0 9.6 11.8"><path d="M4.8 11.6 V1 M0.6 5.2 L4.8 1 L9 5.2" fill="none" stroke="#f4f6fc" stroke-width="1"/></svg>
<div class="t" style="left:757.3px;top:518px;font-size:9.80px;line-height:20px;color:#f4f6fc;letter-spacing:-0.015px;">Add to Source Control</div>
<svg class="r" style="left:858.2px;top:526.6px" width="6.4" height="3.6" viewBox="0 0 6.4 3.6"><path d="M0 3.6 L3.2 0 L6.4 3.6 Z" fill="#f4f6fc"/></svg>
<svg class="r" style="left:882.2px;top:522.8px" width="11.8" height="11.4" viewBox="0 0 11.8 11.4"><path d="M0.5 0.6 H11.3 V3 H0.5 Z M1.6 3 V10.8 H10.2 V3 M4.2 5 V7.6 H7.6 V5" fill="none" stroke="#f4f6fc" stroke-width="1"/></svg>
<div class="t" style="left:898.8px;top:518px;font-size:9.80px;line-height:20px;color:#f4f6fc;letter-spacing:-0.212px;">Select Repository</div>
<svg class="r" style="left:977.4px;top:526.6px" width="6.4" height="3.6" viewBox="0 0 6.4 3.6"><path d="M0 3.6 L3.2 0 L6.4 3.6 Z" fill="#f4f6fc"/></svg>
<svg class="r" style="left:1000.6px;top:523.4px" width="8.4" height="10.4" viewBox="0 0 8.4 10.4"><path d="M0.6 0.6 H7.8 V7 H4.4 L2.4 9.4 V7 H0.6 Z" fill="none" stroke="#f4f6fc" stroke-width="0.9"/></svg>
<div class="r" style="left:1007px;top:527.7px;width:8.4px;height:8.4px;border-radius:50%;background:#e02433"></div>
<div class="t" style="left:1009.5px;top:523px;font-size:6.60px;line-height:20px;color:#fff;font-weight:bold;letter-spacing:-0.271px;">1</div>
<div class="r" style="left:948px;top:505.2px;width:70px;height:21.4px;border-radius:4px;background:#f9f9f9;box-shadow:0 1px 3px rgba(0,0,0,0.28),0 0 0 0.5px rgba(0,0,0,0.10)"></div>
<div class="t" style="left:954.5px;top:506px;font-size:10.00px;line-height:20px;color:#1b1b1b;letter-spacing:-0.185px;">Show desktop</div>
<div class="r" style="left:0;top:537.6px;width:1024px;height:38.4px;background:linear-gradient(90deg,#e4e1de 0%,#e6e2dc 15%,#ebe4d9 35%,#eee5d7 55%,#f0e5d6 72%,#f1e5dc 85%,#f2e6e4 100%)"></div>
<svg class="r" style="left:183.0px;top:547.7px" width="19.2" height="18.6" viewBox="0 0 19.2 18.6"><defs><linearGradient id="wg" x1="0" y1="0" x2="1" y2="1"><stop offset="0" stop-color="#4cc2f5"/><stop offset="1" stop-color="#0a6fd0"/></linearGradient></defs><path d="M0 0 H9.1 V8.8 H0 Z M10.1 0 H19.2 V8.8 H10.1 Z M0 9.8 H9.1 V18.6 H0 Z M10.1 9.8 H19.2 V18.6 H10.1 Z" fill="url(#wg)"/></svg>
<div class="r" style="left:213.4px;top:544px;width:174.9px;height:25.4px;border-radius:12.7px;background:#f8f5f2;border:1px solid #d9d1cc"></div>
<svg class="r" style="left:222.6px;top:551.6px" width="12.2" height="11.2" viewBox="0 0 12.2 11.2"><circle cx="4.9" cy="4.7" r="3.9" fill="none" stroke="#1c1c1c" stroke-width="1.4"/><path d="M7.7 7.6 L11.2 10.6" stroke="#1c1c1c" stroke-width="1.6" stroke-linecap="round"/></svg>
<div class="t" style="left:242.6px;top:547px;font-size:11.00px;line-height:20px;color:#5a5755;letter-spacing:-0.326px;">Search</div>
<svg class="r" style="left:347.4px;top:550.4px" width="8.2" height="7.4" viewBox="-0.6 -0.6 11.2 10.2"><g transform="rotate(12 5 4.5)"><path d="M5 9 C2 6.8 0 5 0 2.8 C0 1.2 1.2 0 2.6 0 C3.6 0 4.5 0.6 5 1.6 C5.5 0.6 6.4 0 7.4 0 C8.8 0 10 1.2 10 2.8 C10 5 8 6.8 5 9 Z" fill="#f38c22"/><circle cx="3" cy="2.6" r="1.3" fill="#f9c23a"/><circle cx="7" cy="2.8" r="0.9" fill="#f7b030"/></g></svg>
<svg class="r" style="left:373.6px;top:551.2px" width="11.2" height="9.6" viewBox="-0.6 -0.6 11.2 10.2"><g transform="rotate(-10 5 4.5)"><path d="M5 9 C2 6.8 0 5 0 2.8 C0 1.2 1.2 0 2.6 0 C3.6 0 4.5 0.6 5 1.6 C5.5 0.6 6.4 0 7.4 0 C8.8 0 10 1.2 10 2.8 C10 5 8 6.8 5 9 Z" fill="#f37d28"/><circle cx="3" cy="2.8" r="1.2" fill="#f79a48"/><circle cx="4" cy="6" r="0.9" fill="#e8452a"/></g></svg>
<svg class="r" style="left:354.0px;top:547.4px" width="21" height="19" viewBox="-1 -1 22 20"><g transform="rotate(-17 11 10)"><path d="M10 0 L11.6 3.2 L13.8 2.2 L13.2 6.4 L15.6 4.6 L16.2 6.2 L19.6 5.8 L18.2 8.8 L19.6 9.8 L15.2 12.6 L15.8 14.4 L11 13.8 L11.4 17.6 L10.2 17.8 L9.2 13.8 L4.2 14.4 L4.8 12.6 L0.4 9.8 L1.8 8.8 L0.4 5.8 L3.8 6.2 L4.4 4.6 L6.8 6.4 L6.2 2.2 L8.4 3.2 Z" fill="#e2202c"/><path d="M10 0 L11.6 3.2 L13.8 2.2 L13.2 6.4 L15.6 4.6 L16.2 6.2 L19.6 5.8 L18.2 8.8 L19.6 9.8 L15.2 12.6 L15.8 14.4 L11 13.8 L10 9 Z" fill="#cf1822"/></g></svg>
<div class="r" style="left:403px;top:547.7px;width:14.4px;height:12.6px;border-radius:1.6px;background:linear-gradient(135deg,#ffffff,#d9d9d9)"></div>
<div class="r" style="left:398.3px;top:552.2px;width:14.8px;height:13.4px;border-radius:1.6px;background:#2a2a2a"></div>
<div class="r" style="left:403px;top:552.2px;width:10.1px;height:8.1px;background:#bdbdbd;opacity:0.85"></div>
<svg class="r" style="left:433.6px;top:547.4px" width="19.4" height="18" viewBox="0 0 19.4 18"><defs><linearGradient id="cp1" x1="0" y1="0" x2="0" y2="1"><stop offset="0" stop-color="#1b8fe6"/><stop offset="0.38" stop-color="#22b4cf"/><stop offset="0.62" stop-color="#5cc66e"/><stop offset="0.85" stop-color="#c9cf3a"/><stop offset="1" stop-color="#f8c21c"/></linearGradient><linearGradient id="cp2" x1="0" y1="0" x2="0" y2="1"><stop offset="0" stop-color="#a65fe6"/><stop offset="0.45" stop-color="#e5679f"/><stop offset="0.8" stop-color="#f47c6a"/><stop offset="1" stop-color="#f7913c"/></linearGradient></defs><path d="M3.4 0.2 H11.4 C12.8 0.2 13.6 1 14 2.2 L14.8 5 H10.6 C9.4 5 8.8 5.6 8.4 6.8 L7 12.6 H2.4 C0.8 12.6 -0.2 11.2 0.2 9.6 L1.4 3 C1.8 1.2 2.4 0.2 3.4 0.2 Z" fill="url(#cp1)"/><path d="M10.4 0.2 H11.4 C12.8 0.2 13.6 1 14 2.2 L14.8 5 H11.4 Z" fill="#2c48c8"/><path d="M16 17.8 H8 C6.6 17.8 5.8 17 5.4 15.8 L4.6 13 H8.8 C10 13 10.6 12.4 11 11.2 L12.4 5.4 H17 C18.6 5.4 19.6 6.8 19.2 8.4 L18 15 C17.6 16.8 17 17.8 16 17.8 Z" fill="url(#cp2)"/><path d="M9 17.8 H8 C6.6 17.8 5.8 17 5.4 15.8 L4.6 13 H8.4 Z" fill="#ee5a2c"/></svg>
<svg class="r" style="left:468.8px;top:546.6px" width="19.4" height="19.6" viewBox="0 0 19.4 19.6"><defs><linearGradient id="eg2" x1="0" y1="0" x2="1" y2="0"><stop offset="0" stop-color="#23a0e8"/><stop offset="0.5" stop-color="#2cbcc8"/><stop offset="0.75" stop-color="#46cc8a"/><stop offset="1" stop-color="#58d666"/></linearGradient><clipPath id="ec"><circle cx="9.7" cy="9.8" r="9.6"/></clipPath></defs><g clip-path="url(#ec)"><rect x="0" y="0" width="19.4" height="19.6" fill="#1e80d8"/><path d="M0 7.4 C2 2 6.4 -0.6 11.4 0.2 C16.8 1 20.2 5.6 19.6 10.4 L19.4 13.4 H13.6 C12 13.2 11.6 12 12 10.8 C12.4 9.4 12 8 10.6 7 C8 5.2 3.2 6 0 7.4 Z" fill="url(#eg2)"/><path d="M9.6 7.4 C8 8.6 7.6 11 8.8 12.8 C10.2 14.8 13 15.4 15.6 14.8 C17.2 14.4 18.6 13.8 20 13 V13.2 H13.6 C12 13.2 11.6 12 12 10.8 C12.4 9.4 12 8.2 10.8 7.2 Z" fill="#efe7e0"/><path d="M3.6 6.2 C2.6 9 3.2 12.6 5.6 15 C8.4 17.8 13 18.4 16.4 16.2 C17.6 15.4 18.6 14.4 19.2 13.4 C17 15 13.6 15.4 11.2 14.2 C8.4 12.8 7.2 9.6 8.8 7 C7.2 6 5.2 5.9 3.6 6.2 Z" fill="#155cae"/></g></svg>
<svg class="r" style="left:504.1px;top:547.7px" width="20" height="18" viewBox="0 0 20 18"><path d="M0 1.6 C0 0.8 0.6 0.2 1.4 0.2 H6.6 L8.6 2.4 H18.6 C19.4 2.4 20 3 20 3.8 V16 C20 17 19.4 17.6 18.6 17.6 H1.4 C0.6 17.6 0 17 0 16 Z" fill="#f2b92d"/><path d="M0 4.6 H20 V16 C20 17 19.4 17.6 18.6 17.6 H1.4 C0.6 17.6 0 17 0 16 Z" fill="#fbd45e"/><path d="M3.4 17.6 V13.4 C3.4 12.4 4.2 11.6 5.2 11.6 H14.8 C15.8 11.6 16.6 12.4 16.6 13.4 V17.6 Z" fill="#2a86de"/><rect x="6" y="14" width="8" height="1.6" rx="0.8" fill="#1a5fae"/></svg>
<svg class="r" style="left:538.9px;top:547.2px" width="19.2" height="18.4" viewBox="0 0 19.2 18.4"><path d="M4.8 3 V1.8 C4.8 1 5.4 0.6 6.2 0.6 H13 C13.8 0.6 14.4 1 14.4 1.8 V3" fill="none" stroke="#4fb4ee" stroke-width="1.2"/><path d="M0 2.8 H19.2 V16 C19.2 17.4 18.2 18.4 16.8 18.4 H2.4 C1 18.4 0 17.4 0 16 Z" fill="#1a4a86"/><path d="M0 2.8 H19.2 V6 H0 Z" fill="#1f5598"/><rect x="6" y="6.8" width="3.3" height="3.3" fill="#f25022"/><rect x="10" y="6.8" width="3.3" height="3.3" fill="#7fba00"/><rect x="6" y="10.8" width="3.3" height="3.3" fill="#00a4ef"/><rect x="10" y="10.8" width="3.3" height="3.3" fill="#ffb900"/></svg>
<svg class="r" style="left:574.2px;top:548.4px" width="18.8" height="16.4" viewBox="0 0 18.8 16.4"><path d="M4.6 5.6 L11.6 0.4 C12.2 0 12.8 0 13.4 0.4 L18.6 4.2 V13 C18.6 14.6 17.6 15.8 16 15.8 H7.2 C5.6 15.8 4.6 14.6 4.6 13 Z" fill="#2a8be8"/><path d="M4.6 5.6 L11.6 0.4 C12.2 0 12.8 0 13.4 0.4 L18.6 4.2 L9.6 10.6 Z" fill="#5cbcf8"/><path d="M9 4 L15.4 1.8 L18.6 4.2 L11 9.6 Z" fill="#2b3fb4"/><path d="M18.6 4.2 V13 C18.6 14.6 17.6 15.8 16 15.8 H9 Z" fill="#3d9cf0"/><rect x="0" y="6.6" width="8.6" height="9" rx="2" fill="#1560c8"/><circle cx="4.3" cy="11.1" r="2.2" fill="none" stroke="#fff" stroke-width="1.3"/></svg>
<svg class="r" style="left:609.0px;top:547.2px" width="18.6" height="18" viewBox="0 0 18.6 18"><circle cx="14.6" cy="3.6" r="2.4" fill="#6a74e0"/><circle cx="8.2" cy="3" r="3" fill="#7a83ec"/><path d="M11.4 7 H18 C18.4 7 18.6 7.3 18.6 7.6 V12.4 C18.6 14.6 17 16 15 16 C13 16 11.4 14.6 11.4 12.4 Z" fill="#5a62cc"/><path d="M3.6 7 H13.6 V13 C13.6 15.8 11.4 18 8.6 18 C5.8 18 3.6 15.8 3.6 13 Z" fill="#737ce8"/><rect x="0" y="6.8" width="9" height="9" rx="1.4" fill="#4a51b8"/><path d="M2.6 9.2 H6.4 M4.5 9.2 V13.8" stroke="#fff" stroke-width="1.2"/></svg>
<svg class="r" style="left:644.9px;top:547.0px" width="19.2" height="19.2" viewBox="0 0 20 20"><circle cx="10" cy="10" r="10" fill="#fff"/><path d="M10 10 L1.34 5 A10 10 0 0 1 18.66 5 Z" fill="#e33b2e"/><path d="M10 10 L18.66 5 A10 10 0 0 1 10 20 Z" fill="#fbc116"/><path d="M10 10 L10 20 A10 10 0 0 1 1.34 5 Z" fill="#2da94f"/><path d="M10 5.4 H18.4 A10 10 0 0 0 1.34 5 L5.9 12.4 Z" fill="#e33b2e"/><path d="M14 12.3 L10 20 A10 10 0 0 0 18.66 5 L10 5.4 Z" fill="#fbc116"/><path d="M6 12.3 L1.34 5 A10 10 0 0 0 10 20 L14 12.6 Z" fill="#2da94f"/><circle cx="10" cy="10" r="4.6" fill="#fff"/><circle cx="10" cy="10" r="3.7" fill="#3c7fe8"/></svg>
<svg class="r" style="left:679.7px;top:547.0px" width="19.2" height="19.2" viewBox="0 0 19.2 19.2"><defs><linearGradient id="mp" x1="0" y1="0" x2="1" y2="1"><stop offset="0" stop-color="#f59a2e"/><stop offset="1" stop-color="#d3408a"/></linearGradient></defs><circle cx="9.6" cy="9.6" r="9.4" fill="url(#mp)"/><circle cx="9.6" cy="9.6" r="7.8" fill="#2c2a2c"/><path d="M7 5.2 L14 9.6 L7 14 Z" fill="#fff"/></svg>
<div class="r" style="left:710px;top:541.8px;width:30.2px;height:30.6px;border-radius:3.2px;background:#f6efe6;border:0.6px solid #eadfd6"></div>
<svg class="r" style="left:714.9px;top:546.7px" width="20" height="19.3" viewBox="0 0 20 19.3"><path d="M0 13.2 L4.2 16.5 L14.6 6.8 V0 Z" fill="#6b41b6"/><path d="M0 6.4 L4.2 3.5 L14.6 12.6 V19.3 Z" fill="#a274e4"/><path d="M0 6.4 V13.2 L3 11.3 V8.7 Z" fill="#4d3690"/><path d="M3 11.3 L0 13.2 L4.2 16.5 L8 13 L5.6 10.8 Z" fill="#7c50c4"/><path d="M3 8.4 L5.1 10 L3 11.6 Z" fill="#f6efe6"/><path d="M14.2 0 L20 3.9 V15.1 L14.2 19.3 Z" fill="#c59cf8"/><path d="M14.6 6.9 L11.3 9.9 L14.6 12.7 Z" fill="#f6efe6"/></svg>
<div class="r" style="left:718.4px;top:569.5px;width:12.7px;height:2.8px;border-radius:1.4px;background:#1679d6"></div>
<svg class="r" style="left:750.4px;top:548.0px" width="19.4" height="17" viewBox="0 0 19.4 17"><path d="M1.4 0.4 H17.8 V12.6 H1.4 Z" fill="#1a7fd0"/><path d="M3.6 1.6 H12.6 V12.6 H3.6 Z" fill="#2aa8ee"/><path d="M0 12 H19.4 V13.4 H0 Z" fill="#1568b4"/><path d="M4 13.4 H12.6 V16.6 H4 Z" fill="#1572c2"/></svg>
<svg class="r" style="left:785.8px;top:546.8px" width="19.6" height="19.6" viewBox="0 0 20 20"><circle cx="10" cy="10" r="10" fill="#fff"/><path d="M10 10 L1.34 5 A10 10 0 0 1 18.66 5 Z" fill="#e33b2e"/><path d="M10 10 L18.66 5 A10 10 0 0 1 10 20 Z" fill="#fbc116"/><path d="M10 10 L10 20 A10 10 0 0 1 1.34 5 Z" fill="#2da94f"/><path d="M10 5.4 H18.4 A10 10 0 0 0 1.34 5 L5.9 12.4 Z" fill="#e33b2e"/><path d="M14 12.3 L10 20 A10 10 0 0 0 18.66 5 L10 5.4 Z" fill="#fbc116"/><path d="M6 12.3 L1.34 5 A10 10 0 0 0 10 20 L14 12.6 Z" fill="#2da94f"/><circle cx="10" cy="10" r="4.6" fill="#fff"/><circle cx="10" cy="10" r="3.7" fill="#3c7fe8"/></svg>
<div class="r" style="left:795.7px;top:543.1px;width:13.4px;height:13.2px;border-radius:50%;background:radial-gradient(circle at 55% 28%,#7a5230 0%,#3a2616 22%,#1e1410 55%,#17100c 100%)"></div>
<div class="r" style="left:793.2px;top:569.8px;width:4.8px;height:2.1px;border-radius:1.1px;background:#8b8886"></div>
<svg class="r" style="left:867.6px;top:554.2px" width="9" height="5" viewBox="0 0 9 5"><path d="M0.6 4.4 L4.5 0.7 L8.4 4.4" fill="none" stroke="#262626" stroke-width="1.2"/></svg>
<svg class="r" style="left:891.0px;top:551.4px" width="13.2" height="10" viewBox="0 0 13.2 10"><path d="M0.6 3.6 C4 0 9.2 0 12.6 3.6" fill="none" stroke="#262626" stroke-width="1.1"/><path d="M2.6 5.6 C4.8 3.2 8.4 3.2 10.6 5.6" fill="none" stroke="#262626" stroke-width="1.1"/><path d="M4.6 7.4 C5.8 6.2 7.4 6.2 8.6 7.4" fill="none" stroke="#262626" stroke-width="1.1"/><circle cx="6.6" cy="8.9" r="0.9" fill="#262626"/></svg>
<svg class="r" style="left:910.2px;top:551.4px" width="13.4" height="10.2" viewBox="0 0 13.4 10.2"><path d="M0.6 3.6 H2.8 L6 0.8 V9.4 L2.8 6.6 H0.6 Z" fill="none" stroke="#262626" stroke-width="1"/><path d="M8 3.4 C8.8 4.4 8.8 5.8 8 6.8 M9.8 2 C11.4 3.8 11.4 6.4 9.8 8.2 M11.6 0.6 C13.8 3.2 13.8 7 11.6 9.6" fill="none" stroke="#262626" stroke-width="1"/></svg>
<svg class="r" style="left:929.4px;top:552.6px" width="16.4" height="8.6" viewBox="0 0 16.4 8.6"><rect x="0.6" y="0.6" width="13.8" height="7.4" rx="2.2" fill="none" stroke="#262626" stroke-width="1.1"/><rect x="2.2" y="2.2" width="10.6" height="4.2" rx="1.2" fill="#1c1c1c"/><path d="M15.4 3 V5.6" stroke="#262626" stroke-width="1.2" stroke-linecap="round"/></svg>
<div class="t" style="left:973.3px;top:541px;font-size:9.60px;line-height:20px;color:#222;letter-spacing:-0.036px;">8:07 PM</div>
<div class="t" style="left:958.4px;top:553px;font-size:9.60px;line-height:20px;color:#222;letter-spacing:0.129px;">2026-02-16</div>
<div class="r" style="left:1018.8px;top:550.4px;width:0.9px;height:12.4px;background:#8d8987;"></div>
</body>
</html>
